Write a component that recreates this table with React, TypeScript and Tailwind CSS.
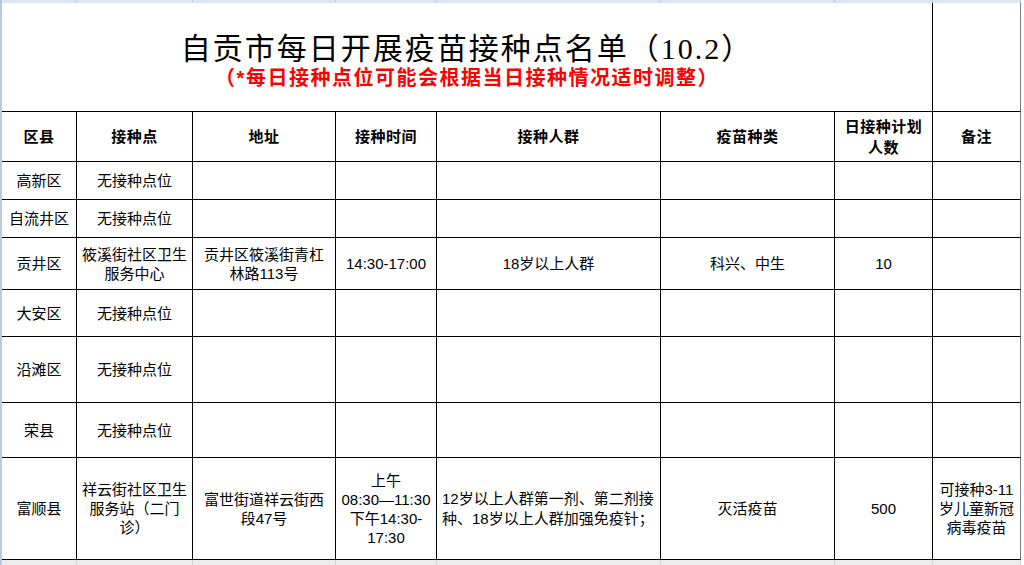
const cols = "grid grid-cols-[75px_116px_143px_101px_224px_174px_98px_88px]";
const font = "font-['Liberation_Sans','Noto_Sans_CJK_SC',sans-serif]";

type Row = { h: string; cells: React.ReactNode[]; left?: number };

const rows: Row[] = [
  { h: "h-[38px]", cells: ["高新区", "无接种点位", "", "", "", "", "", ""] },
  { h: "h-[38px]", cells: ["自流井区", "无接种点位", "", "", "", "", "", ""] },
  {
    h: "h-[52px]",
    cells: [
      "贡井区",
      <>筱溪街社区卫生<br />服务中心</>,
      <>贡井区筱溪街青杠<br />林路113号</>,
      "14:30-17:00",
      "18岁以上人群",
      "科兴、中生",
      "10",
      "",
    ],
  },
  { h: "h-[47px]", cells: ["大安区", "无接种点位", "", "", "", "", "", ""] },
  { h: "h-[66px]", cells: ["沿滩区", "无接种点位", "", "", "", "", "", ""] },
  { h: "h-[55px]", cells: ["荣县", "无接种点位", "", "", "", "", "", ""] },
  {
    h: "h-[102px]",
    left: 4,
    cells: [
      "富顺县",
      <>祥云街社区卫生<br />服务站（二门<br />诊）</>,
      <>富世街道祥云街西<br />段47号</>,
      <>上午<br />08:30—11:30<br />下午14:30-<br />17:30</>,
      <>12岁以上人群第一剂、第二剂接<br />种、18岁以上人群加强免疫针；</>,
      "灭活疫苗",
      "500",
      <>可接种3-11<br />岁儿童新冠<br />病毒疫苗</>,
    ],
  },
];

const headers = ["区县", "接种点", "地址", "接种时间", "接种人群", "疫苗种类", <>日接种计划<br />人数</>, "备注"];

function Cell({ i, children, className = "" }: { i: number; children?: React.ReactNode; className?: string }) {
  return (
    <div
      className={`flex items-center border-b border-r ${i === 7 ? "border-r-[#7f7f7f]" : "border-r-black"} border-b-black ${className}`}
    >
      {children}
    </div>
  );
}

export default function App() {
  return (
    <div className={`flex h-[565px] w-[1024px] overflow-hidden bg-white text-black ${font}`}>
      <div className="w-[2px] shrink-0 bg-[#b9c9e2]" />
      <div className="flex w-[1019px] flex-col">
        {/* sliver of the row above */}
        <div className={`${cols} h-[3px] bg-[#dce5f1]`}>
          {headers.map((_, i) => (
            <div key={i} className="border-r border-[#bccbe0]" />
          ))}
        </div>

        {/* title */}
        <div className={`${cols} h-[109px]`}>
          <div className="col-span-7 flex flex-col items-center justify-center border-b border-r border-black pt-[8px]">
            <div className="font-['Liberation_Serif','Noto_Sans_CJK_SC',serif] text-[30px] leading-[33px] tracking-[2px]">
              自贡市每日开展疫苗接种点名单（10.2）
            </div>
            <div className="text-[20px] font-bold leading-[26px] tracking-[1.5px] text-[#ff0000]">
              （*每日接种点位可能会根据当日接种情况适时调整）
            </div>
          </div>
          <Cell i={7} />
        </div>

        {/* header row */}
        <div className={`${cols} h-[50px]`}>
          {headers.map((h, i) => (
            <Cell key={i} i={i} className="justify-center text-center text-[15px] font-bold leading-[21px] tracking-[0.5px]">
              <span>{h}</span>
            </Cell>
          ))}
        </div>

        {rows.map((r, ri) => (
          <div key={ri} className={`${cols} ${r.h}`}>
            {r.cells.map((c, i) => (
              <Cell
                key={i}
                i={i}
                className={`${i === 4 && r.left ? "justify-start pl-[5px] text-left leading-[20px]" : "justify-center text-center leading-[19px]"} whitespace-nowrap text-[15px]`}
              >
                <span>{c}</span>
              </Cell>
            ))}
          </div>
        ))}

        {/* sliver of the row below */}
        <div className={`${cols} h-[5px] bg-[#ececec]`}>
          {headers.map((_, i) => (
            <div key={i} className="border-r border-[#d2d2d2]" />
          ))}
        </div>
      </div>
      <div className="w-[3px] shrink-0 bg-white" />
    </div>
  );
}
